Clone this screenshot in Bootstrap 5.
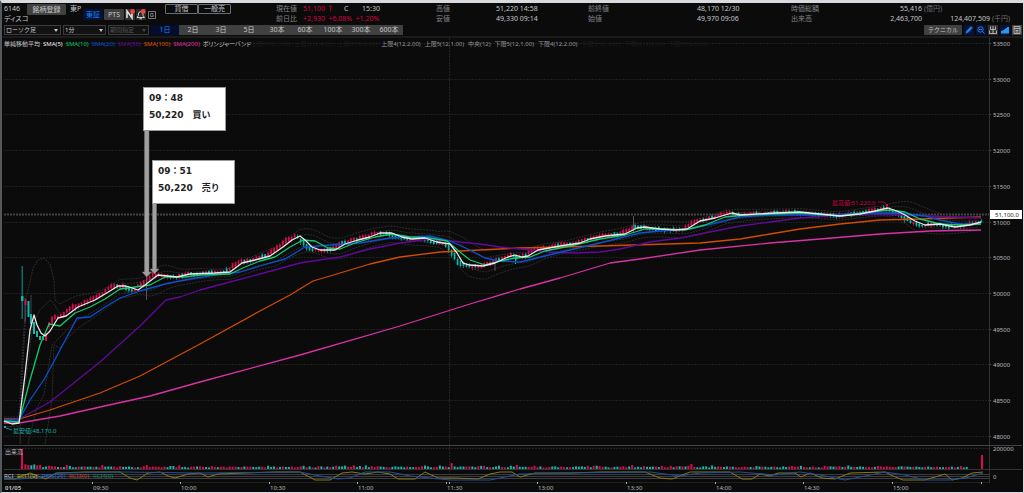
<!DOCTYPE html>
<html lang="ja">
<head>
<meta charset="utf-8">
<meta name="viewport" content="width=device-width, initial-scale=1">
<title>6146 ディスコ 1分足</title>
<link href="https://cdn.jsdelivr.net/npm/bootstrap@5.3.0/dist/css/bootstrap.min.css" rel="stylesheet">
<style>
  body { background: #0b0b0b; color: #c4c4c8; font: 7px/10px "Noto Sans", "Noto Sans CJK JP", sans-serif; font-feature-settings: "palt"; }
  .terminal { border: solid #d8dade; border-width: 3px 1px 1px 2px; border-left-color: #55585a; background: #0b0b0b; }
  .head { height: 22px; padding: 1px 0 0 2px; }
  .ident { width: 272px; }
  .code { width: 23px; white-space: nowrap; }
  .bx { border: 0; border-radius: 1px; padding: 0; height: 11px; line-height: 11px; background: #404040; color: #c4c4c8; }
  .bx-reg { width: 39px; margin-right: 4px; }
  .bx-line { background: #0b0b0b; border: 1px solid #6a6d74; height: 10px; line-height: 8px; width: 33px; }
  .where { width: 13px; }
  .market { margin: 5px 8px 0 0; gap: 1px; }
  .market .bx { width: 20px; }
  .on, .market .on { background: #06103a; color: #168be0; }
  .tiny { width: 10px; height: 11px; display: block; }
  .quotes { display: grid; grid-template-columns: 160fr 152fr 203fr 232fr; }
  .quotes div { white-space: nowrap; }
  .lab { color: #828286; display: inline-block; width: 27px; }
  .rt { display: inline-block; text-align: right; }
  .w18 { width: 18px; } .w41 { width: 41px; } .w55 { width: 55px; } .w104 { width: 104px; } .w68 { width: 68px; }
  .unit { color: #6c6c70; padding-left: 2px; }
  .red { color: #d40440; }
  .tools { height: 13px; padding: 0 1px 0 2px; border-bottom: 2px solid #1b1b1b; gap: 2px; }
  .pick { position: relative; }
  .pick::after { content: ""; position: absolute; right: 3px; top: 4px; border: 2px solid transparent; border-top: 3px solid #c8c8c8; }
  .pick select { appearance: none; display: block; width: 100%; height: 10px; padding: 0 1px; font-size: 6px; line-height: 8px; color: #ccccd0; background: #121212; border: 1px solid #3c3c3c; border-radius: 0; opacity: 1; }
  .pick.off select { color: #555; }
  .pick.off::after { border-top-color: #444; }
  .p1 { width: 57px; } .p2 { width: 43px; } .p3 { width: 41px; }
  .spans button { width: 28px; height: 10px; line-height: 10px; border-radius: 0; font-size: 7px; }
  .spans button.on { background: #040c30; }
  .bx-tech { width: 38px; height: 10px; line-height: 10px; font-size: 6px; }
  .chart { position: relative; }
  .chart svg.plot { display: block; width: 100%; height: auto; }
  .plot text { font-size: 6px; fill: #b8b8bc; }
  .legend-row { position: absolute; left: 2px; top: 1px; gap: 3px; font-size: 6px; white-space: nowrap; }
  .legend-row .bands { position: absolute; left: 247px; gap: 4px; color: #94949a; }
  .bands .hid { color: #1b1b1b; }
  .note { position: absolute; width: 83px; height: 44px; padding: 2px 5px; background: #fff; color: #222; border: 1px solid #999; font: bold 9px/17px "DejaVu Sans", "Noto Sans CJK JP", sans-serif; font-feature-settings: normal; white-space: nowrap; }
  .note-buy { left: 13.8%; top: 10.7%; }
  .note-sell { left: 14.7%; top: 26.9%; }
</style>
</head>
<body>
<main class="terminal">
  <header class="head d-flex">
    <div class="ident d-flex align-items-start flex-shrink-0">
      <div class="code">6146<br>ディスコ</div>
      <button class="bx bx-reg">銘柄登録</button>
      <span class="where">東P</span>
      <div class="market d-flex">
        <button class="bx on">東証</button>
        <button class="bx">PTS</button>
        <svg class="tiny" viewBox="0 0 10 11"><path d="M0 0h10v11H0z" fill="#333"/><path d="M2 9V2l5 7V3" fill="none" stroke="#ddd" stroke-width="1.6"/><circle cx="7.5" cy="2.5" r="2.4" fill="#f0443c"/></svg>
        <svg class="tiny" viewBox="0 0 10 11"><path d="M0 0h10v11H0z" fill="#2b2b2b"/><path d="M1 8.500h7.500L7 6.500V5a2.300 2.300 0 0 0-4.600 0v1.500zM3.500 9.800h2.500" fill="none" stroke="#ccc"/><circle cx="7.200" cy="2.500" r="2.400" fill="#f0443c"/></svg>
        <svg class="tiny" viewBox="0 0 10 11"><path d="M1.500 2.500h7v7h-7z" fill="none" stroke="#777"/><path d="M6.500 4.500H3.700v3h2.600V6H5" fill="none" stroke="#999" stroke-width=".7"/></svg>
      </div>
      <button class="bx bx-line">貸借</button>
      <button class="bx bx-line">一般売</button>
    </div>
    <section class="quotes flex-grow-1">
      <div><span class="lab">現在値</span><span class="red rt w41 text-start">51,100 ↑</span><span class="rt w18 text-start">C</span>15:30<br>
        <span class="lab">前日比</span><span class="red">+2,930&ensp;+6.08%&ensp;+1.20%</span></div>
      <div><span class="lab">高値</span><span class="rt w55">51,220</span> 14:58<br><span class="lab">安値</span><span class="rt w55">49,330</span> 09:14</div>
      <div><span class="lab">前終値</span><span class="rt w104">48,170</span> 12/30<br><span class="lab">始値</span><span class="rt w104">49,970</span> 09:06</div>
      <div><span class="lab">時価総額</span><span class="rt w104">55,416</span><span class="unit">(億円)</span><br><span class="lab">出来高</span><span class="rt w104">2,463,700</span><span class="rt w68">124,407,509</span><span class="unit">(千円)</span></div>
    </section>
  </header>

  <nav class="tools d-flex align-items-start">
    <div class="pick p1"><select aria-label="チャート種類"><option>ローソク足</option></select></div>
    <div class="pick p2"><select aria-label="足種"><option>1分</option></select></div>
    <div class="pick p3 off"><select aria-label="期間" disabled><option>期間指定</option></select></div>
    <div class="spans d-flex">
      <button class="bx on">1日</button><button class="bx">2日</button><button class="bx">3日</button><button class="bx">5日</button><button class="bx">30本</button><button class="bx">60本</button><button class="bx">100本</button><button class="bx">300本</button><button class="bx">600本</button>
    </div>
    <button class="bx bx-tech ms-auto">テクニカル</button>
    <svg class="tiny" viewBox="0 0 10 11"><path d="M0 0h10v10H0z" fill="#07133c"/><path d="M1.500 8.500l.8-2.400L7 1.300 8.700 3 4 7.700z" fill="#2a7fd8"/></svg>
    <svg class="tiny" viewBox="0 0 10 11"><path d="M0 0h10v10H0z" fill="#07133c"/><circle cx="4.500" cy="4.500" r="2.700" fill="none" stroke="#2a7fd8"/><path d="M3 4.500h3M6.500 6.500l2 2" stroke="#2a7fd8"/></svg>
    <svg class="tiny" viewBox="0 0 10 11"><path d="M0 0h10v10H0z" fill="#333"/><path d="M5 1v7.500M2.500 1.500v3h5v-3M1.500 5.500v3h7v-3" fill="none" stroke="#ccc" stroke-width=".8"/></svg>
    <svg class="tiny" viewBox="0 0 10 11"><path d="M0 0h10v10H0z" fill="#07133c"/><path d="M1 8.500V6l3-1 2-2h1V2h2v6.500z" fill="#2d95ee"/></svg>
    <svg class="tiny" viewBox="0 0 10 11"><path d="M0 0h10v10H0z" fill="#444"/><path d="M2 1.500h6v7H2zM2 3.500h6M3.500 5.500h3M3.500 7h3" fill="none" stroke="#bbb" stroke-width=".9"/></svg>
  </nav>

  <section class="chart">
    <svg class="plot" id="plot" viewBox="2 38 1021 454" role="img" aria-label="1分足チャート"></svg>
    <div class="legend-row d-flex">
      <span>単純移動平均</span><span style="color:#eee">SMA(5)</span><span style="color:#00c864">SMA(10)</span><span style="color:#0a50d8">SMA(20)</span><span style="color:#6a0a9c">SMA(50)</span><span style="color:#e05000">SMA(100)</span><span style="color:#e030a8">SMA(200)</span><span>ボリンジャーバンド</span>
      <div class="bands d-flex"><span class="hid">上限1(12,5.00)</span><span class="hid">上限2(12,4.00)</span><span class="hid">上限3(12,3.00)</span><span>上限4(12,2.00)</span><span>上限5(12,1.00)</span><span>中央(12)</span><span>下限5(12,1.00)</span><span>下限4(12,2.00)</span><span class="hid">下限3(12,3.00)</span><span class="hid">下限2(12,4.00)</span><span class="hid">下限1(12,5.00)</span></div>
    </div>
    <div class="note note-buy">09：48<br>50,220　買い</div>
    <div class="note note-sell">09：51<br>50,220　売り</div>
  </section>
</main>

<script src="https://cdn.jsdelivr.net/npm/bootstrap@5.3.0/dist/js/bootstrap.bundle.min.js"></script>
<script>
const series = {
  sma200: ['#d832a4', '4,423 19,423 60,416 100,407 150,396 200,382 300,355 400,326 470,304 520,289 560,278 610,263 640,259 700,250 770,243 820,239 880,234 930,231 981,230'],
  sma100: ['#d04c00', '4,419 19,419 50,410 100,393 140,376 200,344 260,311 290,295 313,281 340,273 370,264 400,257 440,252 480,250 520,248 600,246 700,243 740,239 770,234 800,229 840,224 880,220 920,219 981,217'],
  sma50: ['#62089a', '4,420 19,419 50,402 100,362 140,326 166,300 180,297 200,290 230,282 260,274 300,263 340,257 370,249 400,243 430,239 450,241 480,244 500,247 520,249 550,252 575,253 600,252 620,249 650,242 680,238 710,232 740,226 770,222 800,218 840,215 880,214 930,216 981,218'],
  sma20: ['#0c50d0', '4,420 19,420 30,400 45,378 60,350 77,318 90,317 105,307 120,298 140,291 165,284 190,279 215,275 240,272 260,266 285,259 305,247 330,245 360,243 390,238 410,237 430,236 450,241 470,250 485,258 500,261 520,262 545,256 570,250 600,243 640,233 660,231 690,229 720,222 740,217 770,215 830,215 870,213 900,213 925,216 940,220 960,224 981,224'],
  sma10: ['#10cc6c', '4,421 19,422 30,380 40,345 49,324 60,326 75,313 90,307 105,299 120,289 135,287 150,285 165,277 185,277 200,275 230,274 245,267 260,261 275,257 290,247 303,240 315,241 328,248 340,249 355,243 375,237 392,234 410,237 430,238 447,241 460,252 470,260 485,265 500,261 515,258 530,257 545,251 570,246 600,239 625,235 645,229 665,229 685,230 705,225 725,217 745,215 800,213 840,216 870,212 890,210 905,212 920,219 940,224 960,225 981,224'],
  sma5: ['#e8e8e8', '4,421 12,424 19,423 25,375 30,330 34,315 37,325 41,333 45,336 50,331 58,318 66,316 78,307 95,300 110,291 118,286 126,286 138,290 145,285 158,275 177,277 190,274 215,273 230,272 242,263 255,260 270,256 283,247 292,240 300,236 305,240 312,247 320,250 335,250 345,244 358,240 370,237 380,233 392,233 402,237 412,239 425,238 437,242 450,244 457,253 463,263 470,265 483,266 495,263 508,257 515,255 522,257 528,256 538,250 560,246 580,243 590,239 605,236 625,234 637,228 645,227 660,229 675,230 687,229 700,221 715,218 725,215 732,213 740,215 775,213 800,212 820,214 840,216 860,214 875,211 888,208 897,211 905,215 915,221 925,225 940,224 955,227 970,225 981,222']
};
const UP = '#dc0a4c', DOWN = '#10b8ac';
const parse = s => s.split(' ').map(p => p.split(',').map(Number));
const at = (pts, x) => {
  for (let i = 1; i < pts.length; i++) if (x <= pts[i][0]) {
    const [a, b] = [pts[i - 1], pts[i]];
    return a[1] + (b[1] - a[1]) * Math.max(0, x - a[0]) / (b[0] - a[0]);
  }
  return pts[pts.length - 1][1];
};
let seed = 11;
const rnd = () => (seed = (seed * 16807) % 2147483647) / 2147483647;
const line = (x1, y1, x2, y2, c, extra = '') => `<path d="M${x1} ${y1}L${x2} ${y2}" stroke="${c}" fill="none" ${extra}/>`;
const rect = (x, y, w, h, c) => `<rect x="${x}" y="${y}" width="${w}" height="${h}" fill="${c}"/>`;
const text = (x, y, s, extra = '') => `<text x="${x}" y="${y}" ${extra}>${s}</text>`;
const poly = (pts, c, w, extra = '') => `<polyline points="${pts}" fill="none" stroke="${c}" stroke-width="${w}" stroke-linejoin="round" ${extra}/>`;
const dash = 'stroke-dasharray="2 1"';
let out = '';

// price grid and scale
for (let i = 0; i < 12; i++) {
  const y = 44 + Math.round(i * 35.7);
  out += line(4, y - .5, 989, y - .5, '#1f1f1f', dash) + line(989, y - .5, 991, y - .5, '#555') + text(993, y + 2, 53500 - i * 500);
}
out += line(449.5, 38, 449.5, 482, '#242424', dash) + line(989.5, 38, 989.5, 483, '#333');
out += line(4, 214.5, 989, 214.5, '#444', 'stroke-width="2" stroke-dasharray="2 1"');

// Bollinger bands
const mid = parse(series.sma10[1]);
const width = parse('60,22 75,17 100,11 140,8 160,14 180,8 220,5 260,8 300,12 320,11 400,8 440,8 465,18 500,12 560,6 640,8 700,8 760,5 830,4 885,5 915,14 950,9 981,6');
for (const k of [-1, -.5, .5, 1]) {
  const p = [];
  for (let x = 60; x <= 981; x += 6) p.push(x + ',' + (at(mid, x) + k * at(width, x)).toFixed(1));
  out += poly(p.join(' '), '#2c2c2c', 1, dash);
}
['4,417 19,417 22,360 26,300 33,268 38,260 44,258 50,264 54,280 55,300 60,304', '20,420 26,380 33,323 40,310 50,300 54,304 60,314', '20,444 22,380 26,310', '28,444 36,410 44,395 52,345 60,337', '45,444 52,400 54,345 60,348', '4,427 19,426 21,444'].forEach(p => out += poly(p, '#2e2e2e', 1, dash));

// candles
const price = parse(series.sma5[1]);
const step = 2.96;
for (let x = 48.7; x < 982; x += step) {
  const prev = at(price, x + 2), next = at(price, Math.min(981, x + 5));
  const lead = next - prev;
  const body = 1 + rnd() * 2.5 + Math.min(4, Math.abs(lead) * .8);
  const up = rnd() < .5 - lead * .3;
  const y = next + (rnd() - .5) * 2 - body / 2;
  const c = up ? UP : DOWN;
  out += rect(x.toFixed(1), (y - rnd() * 2).toFixed(1), .6, (body + 2.5).toFixed(1), c) + rect((x - .5).toFixed(1), y.toFixed(1), 1.7, body.toFixed(1), c);
}
out += rect(21.5, 266, 1.5, 53, '#0c6c66') + rect(21, 296, 2.5, 5, DOWN) + rect(24.5, 298, 1.5, 24, '#44444c') + rect(24.5, 300, 2, 5, UP) + rect(27.5, 301, 2, 16, DOWN) + rect(30.5, 295, 1, 24, '#44444c') + rect(30, 314, 2, 10, DOWN) + rect(33, 322, 2, 12, DOWN) + rect(36, 331, 2, 6, DOWN) + rect(39, 336, 2, 4, DOWN) + rect(42, 336, 2, 4, DOWN) + rect(45, 333, 2, 8, UP);
out += rect(146, 275, 1, 25, '#55555f') + rect(633, 216, 1, 16, '#55555f') + rect(494.5, 262, 1, 9, '#55555f') + rect(515, 255, 1, 9, DOWN);
for (const k in series) out += poly(series[k][1], series[k][0], 1.3);

// extremes and last price
out += rect(4, 426, 2, 2, DOWN) + line(6, 428, 12, 430, DOWN, 'stroke-width=".7"') + text(13, 433, '最安値:48,170.0', 'style="fill:#14b4a8"');
out += text(832, 205, '最高値:51,220.0', 'style="fill:#d00444"') + poly('878,202 884,202 887,205', '#c80040', .8) + rect(886, 204, 2, 2, UP);
out += rect(990, 210, 32, 9, '#fff') + text(995, 217, '51,100.0', 'style="fill:#222"');

// volume
out += rect(4, 445, 1018, 1, '#444') + line(4, 448.5, 989, 448.5, '#222', dash) + text(993, 451, '200000');
const spikes = { 450: 6, 690: 5, 633: 4, 516: 4, 103: 4, 66: 4, 146: 4, 598: 3, 876: 3 };
for (let x = 24.9; x < 967; x += step) {
  let h = 1.5 + rnd() * 1.2 + (rnd() > .85 ? 1 : 0) + (x < 40 ? 2 : 0);
  let c = rnd() < .48 ? UP : DOWN;
  for (const s in spikes) if (Math.abs(x - s) < 1.5) { h = spikes[s]; c = UP; }
  out += rect((x - .5).toFixed(1), (469 - h).toFixed(1), 2, h.toFixed(1), c);
}
out += rect(21, 449, 2, 20, UP) + rect(981, 455, 2, 14, UP) + text(5, 454, '出来高');

// RCI
out += rect(4, 469, 1018, 1, '#333');
[474, 476, 478].forEach(y => out += rect(4, y, 985, 1, '#3c3c40'));
out += poly('4,479 15,479 30,473 46,479 56,473 85,472 120,472 130,478 137,480 148,473 160,472 168,476 175,478 188,474 200,473 208,477 218,474 245,473 275,472 300,472 315,480 330,480 342,473 352,472 365,474 378,472 390,474 398,479 415,479 425,472 438,478 455,478 478,479 490,474 500,472 512,472 520,477 535,473 570,473 600,472 645,472 660,478 672,479 690,472 730,472 742,479 752,479 760,474 770,476 778,473 795,473 801,477 810,473 822,478 835,479 850,473 885,472 893,476 903,480 925,480 945,474 952,480 962,478 972,473 983,472', '#857a1a', 1);
out += poly('4,479 20,479 40,477 60,473 120,472 200,473 300,472 320,476 338,479 350,478 365,472 390,472 410,476 430,478 450,480 490,480 520,474 560,473 650,472 680,476 700,473 740,472 775,475 800,472 820,475 845,480 870,475 885,472 905,475 925,480 950,480 965,478 983,473', '#20509a', 1);
out += text(4, 478, 'RCI') + text(17, 478, 'RCI1(9)', 'style="fill:#b8a820"') + text(42, 478, 'RCI2(26)', 'style="fill:#2468cc"') + text(69, 478, 'RCI3(0)', 'style="fill:#c84820"') + text(93, 478, 'RCI4(0)', 'style="fill:#128858"') + text(993, 479, '0');

// time scale
out += rect(4, 482, 985, 1, '#202020') + text(5, 490, '01/05', 'style="font-weight:bold"');
Object.entries({ '09:30': 92, '10:00': 180, '10:30': 269, '11:00': 357, '11:30': 446, '13:00': 537, '13:30': 626, '14:00': 715, '14:30': 803, '15:00': 892 }).forEach(([t, x]) => out += rect(x, 482, 1, 2, '#aaa') + text(x + 1, 490, t));
out += rect(449, 482, 1, 2, '#aaa') + rect(981, 482, 1, 2, '#aaa');

// trade arrows
out += '<path d="M144.500 130h4.500v142h2.500l-4.700 5-4.700-5h2.400zM152.500 203h4v66h2.500l-4.500 5-4.500-5h2.500z" fill="#a0a0a0" stroke="#777" stroke-width=".5"/>';
document.getElementById('plot').innerHTML = out;
</script>
</body>
</html>
